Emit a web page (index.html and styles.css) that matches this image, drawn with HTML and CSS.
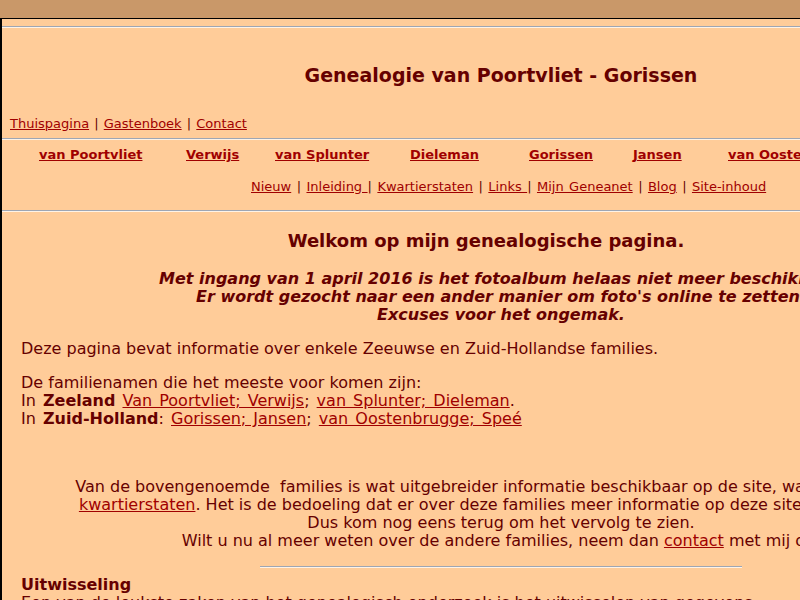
FILE: index.html
```html
<!DOCTYPE html>
<html lang="nl">
<head>
<meta charset="utf-8">
<title>Genealogie van Poortvliet - Gorissen</title>
<link rel="stylesheet" href="styles.css">
</head>
<body>
<div class="topbar"></div>
<div class="page">
  <div class="rule first"></div>
  <h1 class="title">Genealogie van Poortvliet - Gorissen</h1>
  <div class="toplinks"><a href="#">Thuispagina</a> | <a href="#">Gastenboek</a> | <a href="#">Contact</a></div>
  <div class="rule r2"></div>
  <div class="families">
    <a href="#">van Poortvliet</a>
    <a href="#">Verwijs</a>
    <a href="#">van Splunter</a>
    <a href="#">Dieleman</a>
    <a href="#">Gorissen</a>
    <a href="#">Jansen</a>
    <a href="#">van Oostenbrugge</a>
  </div>
  <div class="subnav"><a href="#">Nieuw</a> | <a href="#">Inleiding </a>| <a href="#">Kwartierstaten</a> | <a href="#">Links </a>| <a href="#">Mijn Geneanet</a> | <a href="#">Blog</a> | <a href="#">Site-inhoud</a></div>
  <div class="rule r3"></div>
  <h2 class="welcome">Welkom op mijn genealogische pagina.</h2>
  <p class="notice">Met ingang van 1 april 2016 is het fotoalbum helaas niet meer beschikbaar.<br>Er wordt gezocht naar een ander manier om foto's online te zetten.<br>Excuses voor het ongemak.</p>
  <p class="intro">Deze pagina bevat informatie over enkele Zeeuwse en Zuid-Hollandse families.</p>
  <p class="names">De familienamen die het meeste voor komen zijn:<br><span class="wide">In <b>Zeeland</b> <a href="#">Van Poortvliet; Verwijs</a>; <a href="#">van Splunter; Dieleman</a>.</span><br><span class="wide">In <b>Zuid-Holland</b>: <a href="#">Gorissen; Jansen</a>; <a href="#">van Oostenbrugge; Speé</a></span></p>
  <p class="center">Van de bovengenoemde&nbsp; families is wat uitgebreider informatie beschikbaar op de site, waaronder in mijn<br><a href="#">kwartierstaten</a>. Het is de bedoeling dat er over deze families meer informatie op deze site komt te staan.<br>Dus kom nog eens terug om het vervolg te zien.<br>Wilt u nu al meer weten over de andere families, neem dan <a href="#">contact</a> met mij op.</p>
  <div class="rule half"></div>
  <h3 class="section">Uitwisseling</h3>
  <p class="more">Een van de leukste zaken van het genealogisch onderzoek is het uitwisselen van gegevens.</p>
</div>
</body>
</html>
```
FILE: styles.css
```css
html, body {
  margin: 0;
  padding: 0;
  overflow: hidden;
  background: #ffcc99;
}
body {
  font-family: "DejaVu Sans", Verdana, sans-serif;
  color: #660000;
  width: 800px;
  height: 600px;
}
a {
  color: #a00000;
  text-decoration: underline;
}
.topbar {
  height: 18px;
  background: #c99869;
  border-bottom: 1px solid #000;
  width: 1000px;
}
.page {
  width: 998px;
  border-left: 2px solid #000;
  background: #ffcc99;
  height: 700px;
  padding-top: 7px;
}
.rule {
  margin-top: 7px;
  border-top: 1px solid #9ea6b4;
  border-bottom: 1px solid #fff3e6;
}
.rule.first { margin-top: 0; }
.title {
  margin: 35px 0 0;
  font-size: 19px;
  line-height: 24px;
  text-align: center;
  font-weight: bold;
}
.toplinks {
  margin-top: 29px;
  padding-left: 8px;
  font-size: 13px;
  line-height: 16px;
  word-spacing: 1px;
}
.rule.r2 { margin-top: 6px; }
.families {
  margin-top: 7px;
  display: grid;
  grid-template-columns: 147px 89px 135px 119px 104px 95px auto;
  padding-left: 37px;
  font-size: 13px;
  line-height: 16px;
  font-weight: bold;
}
.subnav {
  margin-top: 16px;
  padding-left: 249px;
  font-size: 13px;
  line-height: 16px;
  word-spacing: 1.3px;
}
.rule.r3 { margin-top: 15px; }
.welcome {
  margin: 18px 0 0;
  padding-right: 30px;
  font-size: 18px;
  line-height: 22px;
  text-align: center;
}
.notice {
  margin: 18px 0 0;
  font-size: 16px;
  line-height: 18px;
  font-style: italic;
  font-weight: bold;
  text-align: center;
}
.intro, .names, .more {
  margin: 16px 0 0;
  padding-left: 19px;
  font-size: 16px;
  line-height: 18px;
}
.wide { word-spacing: 2px; }
.center {
  margin: 50px 0 0;
  font-size: 16px;
  line-height: 18px;
  text-align: center;
}
.rule.half {
  margin: 16px auto 0;
  width: 482px;
}
.section {
  margin: 8px 0 0;
  padding-left: 19px;
  font-size: 16px;
  line-height: 18px;
}
.more { margin-top: 0; }
```
